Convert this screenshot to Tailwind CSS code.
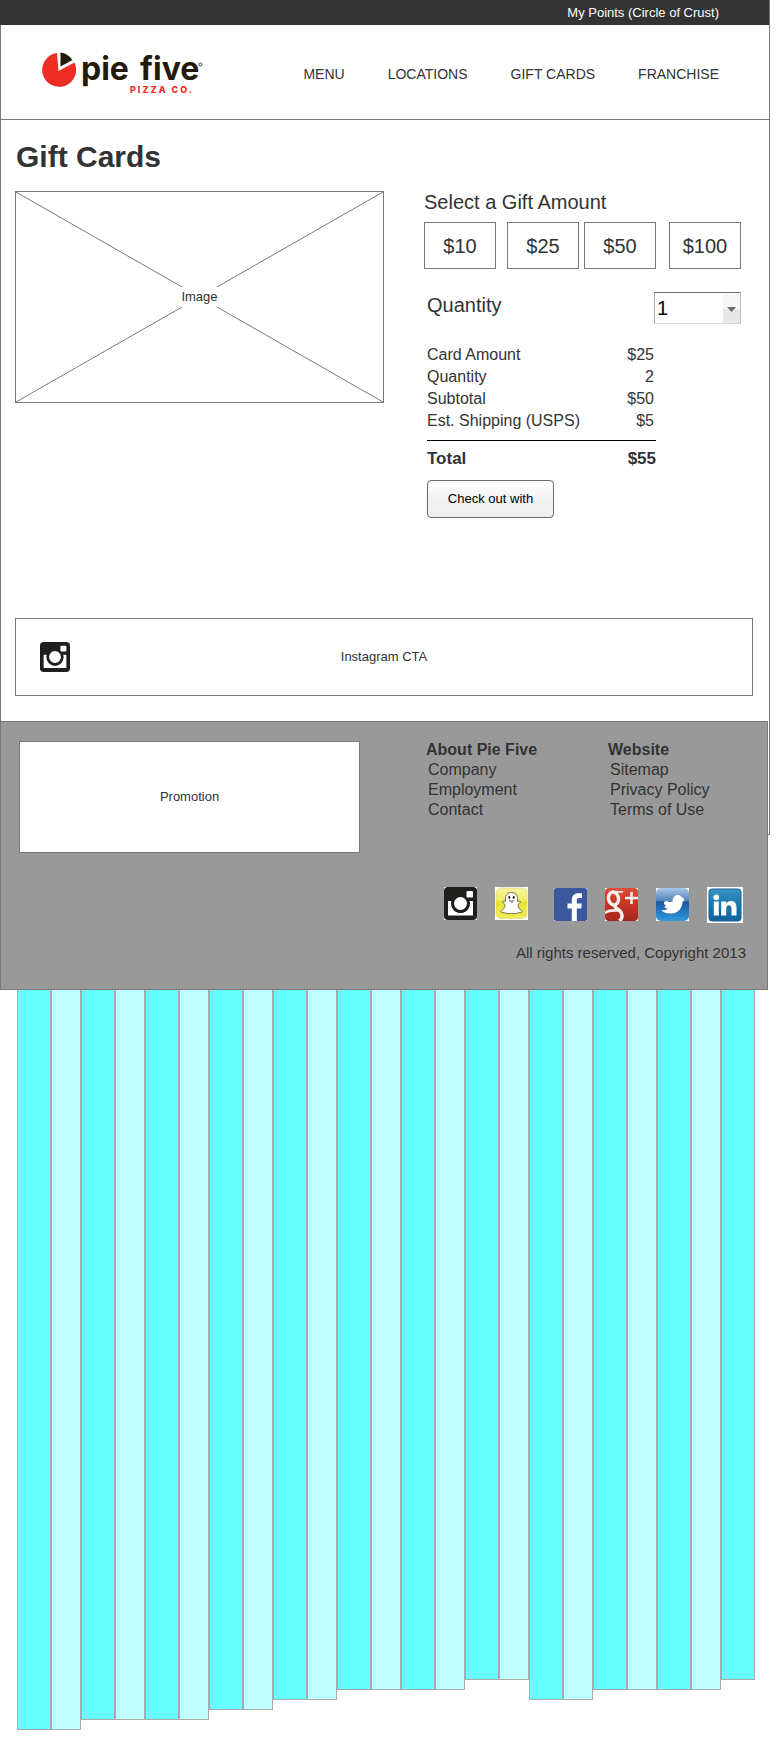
<!DOCTYPE html>
<html lang="en">
<head>
<meta charset="utf-8">
<meta name="viewport" content="width=device-width, initial-scale=1">
<title>Pie Five – Gift Cards</title>
<script src="https://cdn.jsdelivr.net/npm/@tailwindcss/browser@4"></script>
</head>
<body class="bg-white font-['Liberation_Sans',Arial,sans-serif] text-[#333]">
<div class="relative mr-[9px] pb-[9px]">
  <!-- page frame, partly hidden by the footer -->
  <div class="absolute inset-x-0 top-0 h-[835px] border border-[#797979]" aria-hidden="true"></div>

  <div class="relative mr-px flex h-[25px] items-center justify-end bg-[#333] pr-[50px] text-[13px] leading-5 text-white">
    <a href="#">My Points (Circle of Crust)</a>
  </div>

  <header class="relative flex h-[95px] items-center justify-between border-b border-[#797979] pr-[51px] pl-10">
    <a href="#" aria-label="Pie Five Pizza Co.">
      <svg class="block h-[56px] w-[164px]" viewBox="0 0 164 56">
        <path d="M17 9A17 17 0 1 0 34.500 18.500L18.500 27Z" fill="#ee2e24" />
        <path d="M20.500 8.500V22.500L32.500 16A17 17 0 0 0 20.500 8.500Z" fill="#231a08" />
        <text class="font-['Inter',sans-serif] text-[32px] font-bold" y="36" fill="#231a08"><tspan x="41">pie</tspan> <tspan x="100">five</tspan></text>
        <text class="font-['Inter',sans-serif] text-[9px] font-extrabold tracking-[2px]" x="90" y="49" fill="#ee2e24">PIZZA CO.</text>
        <circle cx="160.500" cy="20.500" r="1.500" fill="none" stroke="#231a08" stroke-width=".8" />
      </svg>
    </a>
    <nav class="mt-1 flex gap-[43px] text-[14px] leading-5">
      <a href="#">MENU</a>
      <a href="#">LOCATIONS</a>
      <a href="#">GIFT CARDS</a>
      <a href="#">FRANCHISE</a>
    </nav>
  </header>

  <main class="relative pt-[19px] pl-[15px]">
    <h1 class="pl-px text-[30px] leading-9 font-bold">Gift Cards</h1>
    <div class="mt-4 mr-[29px] flex items-start gap-10">
      <div class="grid h-[212px] flex-1 place-items-center border border-[#797979]">
        <svg class="col-start-1 row-start-1 h-full w-full" viewBox="0 0 100 100" preserveAspectRatio="none" aria-hidden="true">
          <path d="M0 0L100 100M100 0L0 100" stroke="#797979" vector-effect="non-scaling-stroke" fill="none" />
        </svg>
        <span class="col-start-1 row-start-1 bg-white px-0.5 text-[13px] leading-5">Image</span>
      </div>

      <form class="w-[317px]" onsubmit="return false">
        <h2 class="text-[20px] leading-[22px]">Select a Gift Amount</h2>
        <div class="mt-[9px] flex text-[20px] leading-6">
          <button type="button" class="h-[47px] w-[72px] border border-[#797979] bg-white">$10</button>
          <button type="button" class="ml-[11px] h-[47px] w-[72px] border border-[#797979] bg-white">$25</button>
          <button type="button" class="ml-[5px] h-[47px] w-[72px] border border-[#797979] bg-white">$50</button>
          <button type="button" class="ml-[13px] h-[47px] w-[72px] border border-[#797979] bg-white">$100</button>
        </div>
        <div class="mt-[23px] flex justify-between pl-[3px]">
          <label for="quantity" class="text-[20px] leading-[26px]">Quantity</label>
          <div class="relative">
            <select id="quantity" class="block h-8 w-[87px] appearance-none border border-t-[#696969] border-r-[#c0c0c0] border-b-[#d8d8d8] border-l-[#a9a9a9] bg-white pl-[2px] text-[20px] leading-7 text-black">
              <option>1</option>
              <option>2</option>
              <option>3</option>
            </select>
            <span class="pointer-events-none absolute top-[2px] right-px bottom-px flex w-[17px] items-center justify-center bg-linear-to-b from-[#f6f6f6] from-50% to-[#e8e8e8] to-50%">
              <svg class="mt-0.5 h-[5px] w-[9px]" viewBox="0 0 9 5"><path d="M0 0H9L4.500 5Z" fill="#6d6d6d" /></svg>
            </span>
          </div>
        </div>

        <table class="mt-5 ml-[3px] w-[229px] text-[16px] leading-[22px]">
          <tbody>
            <tr><th scope="row" class="text-left font-normal">Card Amount</th><td class="pr-[2px] text-right">$25</td></tr>
            <tr><th scope="row" class="text-left font-normal">Quantity</th><td class="pr-[2px] text-right">2</td></tr>
            <tr><th scope="row" class="text-left font-normal">Subtotal</th><td class="pr-[2px] text-right">$50</td></tr>
            <tr><th scope="row" class="pb-2 text-left font-normal whitespace-nowrap">Est. Shipping (USPS)</th><td class="pr-[2px] pb-2 text-right">$5</td></tr>
          </tbody>
          <tfoot class="border-t border-black text-[17px] leading-6 font-bold">
            <tr><th scope="row" class="pt-[6px] text-left">Total</th><td class="pt-[6px] text-right">$55</td></tr>
          </tfoot>
        </table>

        <button type="submit" class="mt-[9px] ml-[3px] block h-[38px] w-[127px] rounded-[4px] border border-[#696969] bg-linear-to-b from-white via-[#f2f2f2] to-[#eee] text-[13px] leading-5 text-black">Check out with</button>
      </form>
    </div>

    <section class="mt-[100px] mr-[17px] mb-[25px] grid h-[78px] grid-cols-[1fr_auto_1fr] items-center border border-[#797979] bg-white text-[13px] leading-5">
      <svg class="ml-6 h-[30px] w-[30px]" viewBox="0 0 33 33" aria-hidden="true">
        <rect width="33" height="33" rx="4" fill="#1f1f1d" />
        <path d="M4 14H8A9 9 0 1 0 25 14H29V28.500H4Z" fill="#fff" />
        <circle cx="16.500" cy="16.500" r="8" fill="#fff" stroke="#1f1f1d" stroke-width="3" />
        <rect x="22.500" y="4" width="6.500" height="6.500" rx="1" fill="#fff" />
      </svg>
      <a href="#">Instagram CTA</a>
    </section>
  </main>

  <footer class="relative mr-[2px] border border-[#797979] bg-[#999] pt-[18px] pr-[21px] pb-[26px] pl-[18px]">
    <div class="flex items-start text-[16px] leading-5">
      <div class="mt-px mr-[66px] flex h-[112px] flex-1 items-center justify-center border border-[#797979] bg-white text-[13px]">Promotion</div>
      <nav class="w-[182px]" aria-labelledby="about">
        <h3 id="about" class="font-bold">About Pie Five</h3>
        <ul class="pl-[2px]">
          <li><a href="#">Company</a></li>
          <li><a href="#">Employment</a></li>
          <li><a href="#">Contact</a></li>
        </ul>
      </nav>
      <nav class="w-[138px]" aria-labelledby="website">
        <h3 id="website" class="font-bold">Website</h3>
        <ul class="pl-[2px]">
          <li><a href="#">Sitemap</a></li>
          <li><a href="#">Privacy Policy</a></li>
          <li><a href="#">Terms of Use</a></li>
        </ul>
      </nav>
    </div>

    <div class="mt-[34px] mr-[3px] flex items-start justify-end gap-[18px]">
      <a href="#" aria-label="Instagram">
        <svg class="h-[33px] w-[33px]" viewBox="0 0 33 33">
          <rect width="33" height="33" fill="#fff" />
          <rect width="33" height="33" rx="4" fill="#1f1f1d" />
          <path d="M4 14H8A9 9 0 1 0 25 14H29V28.500H4Z" fill="#fff" />
          <circle cx="16.500" cy="16.500" r="8" fill="#fff" stroke="#1f1f1d" stroke-width="3" />
          <rect x="22.500" y="4" width="6.500" height="6.500" rx="1" fill="#fff" />
        </svg>
      </a>
      <a href="#" aria-label="Snapchat" class="mr-2">
        <svg class="h-[33px] w-[33px]" viewBox="0 0 33 33">
          <defs><linearGradient id="snap" x2="0" y2="1"><stop offset="0" stop-color="#f8f5a0" /><stop offset=".4" stop-color="#f3ed62" /><stop offset=".45" stop-color="#ece32c" /><stop offset="1" stop-color="#f3ec55" /></linearGradient></defs>
          <rect width="33" height="33" fill="#fff" />
          <rect x="1" y="1" width="31" height="30.500" rx="5" fill="url(#snap)" stroke="#d9d27a" stroke-width=".6" />
          <path d="M16.500 5.500C12.500 5.500 10.500 8 10.500 11.500V14.500C9 14 7.500 14 7.500 15C7.500 16.500 10 16.500 10 18C10 21 7.500 23 5.500 24.500C6.500 26 9 25.500 10.500 26C12.500 27 14 26.500 16.500 26.500S20.500 27 22.500 26C24 25.500 26.500 26 27.500 24.500C25.500 23 23 21 23 18C23 16.500 25.500 16.500 25.500 15C25.500 14 24 14 22.500 14.500V11.500C22.500 8 20.500 5.500 16.500 5.500Z" fill="#fff" stroke="#66613c" stroke-width=".9" />
          <ellipse cx="14.300" cy="10.500" rx="1" ry="1.400" fill="#222" /><ellipse cx="18.700" cy="10.500" rx="1" ry="1.400" fill="#222" />
          <path d="M14 13.500Q16.500 15 19 13.500" fill="none" stroke="#444" stroke-width=".8" /><path d="M16 14.300H18V15.800H16Z" fill="#e2608c" />
        </svg>
      </a>
      <a href="#" aria-label="Facebook" class="mt-px">
        <svg class="h-[33px] w-[33px]" viewBox="0 0 33 33">
          <rect width="33" height="33" fill="#fff" />
          <rect width="33" height="33" rx="2" fill="#3b579d" />
          <path d="M17.800 33V20.500H13.500V15.500H17.800V12C17.800 7.500 20.200 5.200 24.200 5.200H28V10H25.500C23.500 10 22.800 11 22.800 12.800V15.500H27.800L27.200 20.500H22.800V33Z" fill="#fff" />
        </svg>
      </a>
      <a href="#" aria-label="Google Plus" class="mt-px">
        <svg class="h-[33px] w-[33px]" viewBox="0 0 33 33">
          <defs><linearGradient id="gplus" x2="0" y2="1"><stop offset="0" stop-color="#dd4b39" /><stop offset=".5" stop-color="#c43526" /><stop offset="1" stop-color="#a5271b" /></linearGradient></defs>
          <rect width="33" height="33" fill="#fff" />
          <rect width="33" height="33" rx="4" fill="url(#gplus)" />
          <g fill="none" stroke="#f6eeec">
            <ellipse cx="8.500" cy="10.500" rx="5" ry="6.500" stroke-width="3.400" transform="rotate(-12 8.500 10.500)" />
            <path d="M9 3.800H18" stroke-width="1.800" />
            <path d="M10 17C9 20 12.500 20.500 15 23C18 26 17.500 30 14.500 33" stroke-width="3.600" />
            <path d="M0 25C3 22.500 7 22 13 22.500" stroke-width="2.600" />
            <path d="M26.500 4V16M20 10H33" stroke-width="2.600" />
          </g>
        </svg>
      </a>
      <a href="#" aria-label="Twitter" class="mt-px">
        <svg class="h-[33px] w-[33px]" viewBox="0 0 33 33">
          <defs><linearGradient id="tw" x2="0" y2="1"><stop offset="0" stop-color="#a9c8ea" /><stop offset=".38" stop-color="#5385bf" /><stop offset=".42" stop-color="#1c569d" /><stop offset="1" stop-color="#2f9ade" /></linearGradient></defs>
          <rect width="33" height="33" fill="#fff" />
          <rect width="33" height="33" rx="5" fill="url(#tw)" />
          <path d="M28.500 13L26.500 13.500C26.500 19.500 22.500 25.500 15 25.500C10.500 25.500 7 24.500 5 22C8 22.500 10.500 22 12 20.800C10 20.500 8.500 19.500 8.500 18.200L10.500 18C8.500 17 7.500 15.500 8 13.500L10 14.200C9.500 13.500 9.200 13 9.500 12.500C12 14 14 14.200 16.500 13.500C16.500 9.500 19 7 22 7C24 7 25.200 8 26 9.500L28 9.800L27.300 11.300Z" fill="#fff" />
        </svg>
      </a>
      <a href="#" aria-label="LinkedIn">
        <svg class="h-9 w-9" viewBox="0 0 36 36">
          <defs><linearGradient id="li" x2="0" y2="1"><stop offset="0" stop-color="#3a93c2" /><stop offset=".45" stop-color="#1a7ab0" /><stop offset="1" stop-color="#12639a" /></linearGradient></defs>
          <rect width="36" height="36" fill="#fff" />
          <rect x="2" y="2" width="32" height="32" rx="3" fill="url(#li)" stroke="#12639a" />
          <circle cx="9.300" cy="10.300" r="2.900" fill="#fff" />
          <path d="M6.800 14.500H11.800V28.500H6.800ZM14.200 14.500H19V16.500C20 15 21.500 14.100 23.800 14.100C28 14.100 29.500 16.800 29.500 20.800V28.500H24.500V21.700C24.500 19.500 23.800 18.300 22 18.300C20.200 18.300 19.200 19.600 19.200 21.700V28.500H14.200Z" fill="#fff" />
        </svg>
      </a>
    </div>
    <p class="mt-5 text-right text-[15px] leading-5">All rights reserved, Copyright 2013</p>
  </footer>

  <!-- layout grid columns -->
  <div class="mr-[15px] ml-[17px] flex items-start" aria-hidden="true">
    <div class="h-[740px] flex-34 border border-t-0 border-[#aaa] bg-[#6ff]"></div>
    <div class="h-[740px] flex-30 border border-t-0 border-[#aaa] bg-[#c2ffff]"></div>
    <div class="h-[730px] flex-34 border border-t-0 border-[#aaa] bg-[#6ff]"></div>
    <div class="h-[730px] flex-30 border border-t-0 border-[#aaa] bg-[#c2ffff]"></div>
    <div class="h-[730px] flex-34 border border-t-0 border-[#aaa] bg-[#6ff]"></div>
    <div class="h-[730px] flex-30 border border-t-0 border-[#aaa] bg-[#c2ffff]"></div>
    <div class="h-[720px] flex-34 border border-t-0 border-[#aaa] bg-[#6ff]"></div>
    <div class="h-[720px] flex-30 border border-t-0 border-[#aaa] bg-[#c2ffff]"></div>
    <div class="h-[710px] flex-34 border border-t-0 border-[#aaa] bg-[#6ff]"></div>
    <div class="h-[710px] flex-30 border border-t-0 border-[#aaa] bg-[#c2ffff]"></div>
    <div class="h-[700px] flex-34 border border-t-0 border-[#aaa] bg-[#6ff]"></div>
    <div class="h-[700px] flex-30 border border-t-0 border-[#aaa] bg-[#c2ffff]"></div>
    <div class="h-[700px] flex-34 border border-t-0 border-[#aaa] bg-[#6ff]"></div>
    <div class="h-[700px] flex-30 border border-t-0 border-[#aaa] bg-[#c2ffff]"></div>
    <div class="h-[690px] flex-34 border border-t-0 border-[#aaa] bg-[#6ff]"></div>
    <div class="h-[690px] flex-30 border border-t-0 border-[#aaa] bg-[#c2ffff]"></div>
    <div class="h-[710px] flex-34 border border-t-0 border-[#aaa] bg-[#6ff]"></div>
    <div class="h-[710px] flex-30 border border-t-0 border-[#aaa] bg-[#c2ffff]"></div>
    <div class="h-[700px] flex-34 border border-t-0 border-[#aaa] bg-[#6ff]"></div>
    <div class="h-[700px] flex-30 border border-t-0 border-[#aaa] bg-[#c2ffff]"></div>
    <div class="h-[700px] flex-34 border border-t-0 border-[#aaa] bg-[#6ff]"></div>
    <div class="h-[700px] flex-30 border border-t-0 border-[#aaa] bg-[#c2ffff]"></div>
    <div class="h-[690px] flex-34 border border-t-0 border-[#aaa] bg-[#6ff]"></div>
  </div>
</div>
</body>
</html>
